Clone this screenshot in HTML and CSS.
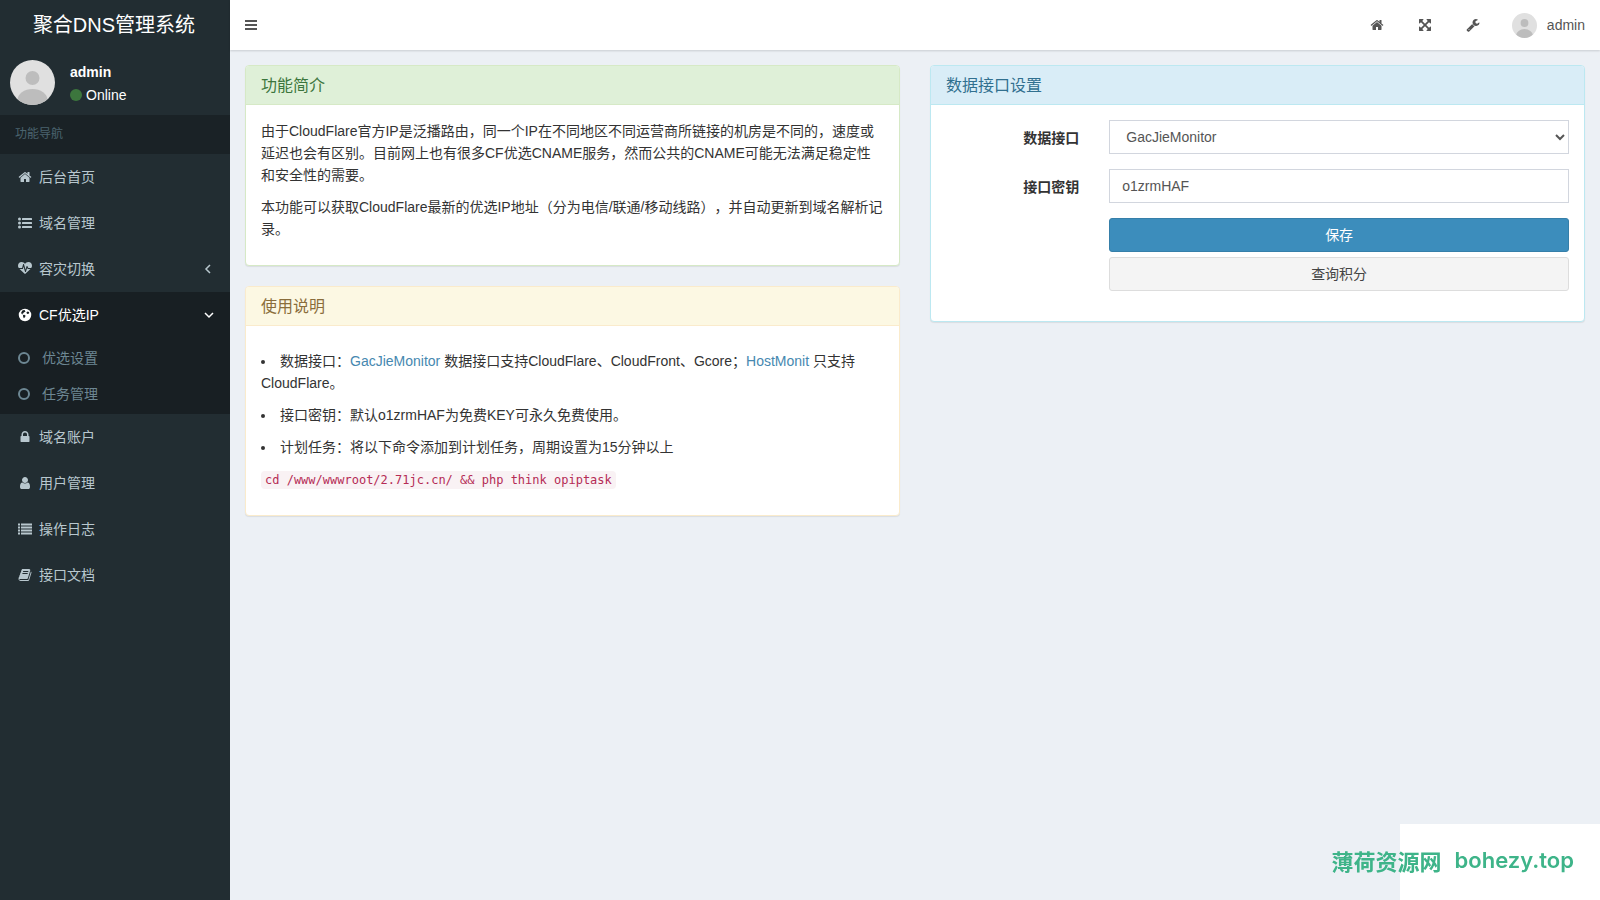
FILE: index.html
```html
<!DOCTYPE html>
<html lang="zh-CN">
<head>
<meta charset="utf-8">
<title>聚合DNS管理系统</title>
<link rel="stylesheet" href="styles.css">
</head>
<body>
<svg class="sprite" aria-hidden="true">
  <symbol id="i-home" viewBox="0 0 1792 1792"><path d="M1472 992v480q0 26-19 45t-45 19h-384v-384h-256v384h-384q-26 0-45-19t-19-45v-480q0-1 .5-3t.5-3l575-474 575 474q1 2 1 6zm223-69l-62 74q-8 9-21 11h-3q-13 0-21-7l-692-577-692 577q-12 8-24 7-13-2-21-11l-62-74q-8-10-7-23.5t11-21.5l719-599q32-26 76-26t76 26l244 204v-195q0-14 9-23t23-9h192q14 0 23 9t9 23v408l219 182q10 8 11 21.5t-7 23.5z"/></symbol>
  <symbol id="i-list-ul" viewBox="0 0 1792 1792"><circle cx="192" cy="384" r="192"/><circle cx="192" cy="896" r="192"/><circle cx="192" cy="1408" r="192"/><rect x="512" y="256" width="1280" height="256" rx="32"/><rect x="512" y="768" width="1280" height="256" rx="32"/><rect x="512" y="1280" width="1280" height="256" rx="32"/></symbol>
  <symbol id="i-list" viewBox="0 0 1792 1792"><path d="M0 192h256v256H0zM0 576h256v256H0zM0 960h256v256H0zM0 1344h256v256H0zM384 192h1408v256H384zM384 576h1408v256H384zM384 960h1408v256H384zM384 1344h1408v256H384z"/></symbol>
  <symbol id="i-heart" viewBox="0 0 1792 1792"><path d="M1280 896h305q-5 6-10 10.5t-9 7.5l-3 4-623 600q-18 18-44 18t-44-18l-624-602q-5-2-21-20h369q22 0 39.5-13.5t22.5-34.5l70-281 190 667q6 20 23 33t39 13q21 0 38-13t23-33l146-485 56 112q18 35 57 35zm512-428q0 145-103 300h-369l-111-221q-8-17-25.5-27t-36.5-8q-45 5-56 46l-129 430-196-686q-6-20-23.5-33t-39.5-13-39 13.5-22 34.5l-116 464h-423q-103-155-103-300 0-220 127-344t351-124q62 0 126.5 21.5t120 58 95.5 68.5 76 68q36-36 76-68t95.5-68.5 120-58 126.5-21.5q224 0 351 124t127 344z"/></symbol>
  <symbol id="i-globe" viewBox="0 0 1792 1792"><circle cx="896" cy="896" r="800"/><path class="land" d="M560 330L760 250 900 270 850 370 960 400 900 500 760 540 680 680 560 720 600 800 560 840 470 760 400 620ZM1080 540L1250 440 1400 520 1440 640 1300 760 1140 720ZM640 880L800 860 980 1000 880 1180 760 1300 660 1160Z"/></symbol>
  <symbol id="i-lock" viewBox="0 0 1792 1792"><path d="M640 768h512v-192q0-106-75-181t-181-75-181 75-75 181v192zm832 96v576q0 40-28 68t-68 28h-960q-40 0-68-28t-28-68v-576q0-40 28-68t68-28h32v-192q0-184 132-316t316-132 316 132 132 316v192h32q40 0 68 28t28 68z"/></symbol>
  <symbol id="i-user" viewBox="0 0 1792 1792"><path d="M1536 1399q0 109-62.5 187t-150.5 78h-854q-88 0-150.5-78t-62.5-187q0-85 8.5-160.5t31.5-152 58.5-131 94-89 134.5-34.5q131 128 313 128t313-128q76 0 134.5 34.5t94 89 58.5 131 31.5 152 8.5 160.5zm-256-887q0 159-112.5 271.5t-271.5 112.5-271.5-112.5-112.5-271.5 112.5-271.5 271.5-112.5 271.5 112.5 112.5 271.5z"/></symbol>
  <symbol id="i-book" viewBox="0 0 1792 1792"><path d="M1703 478q40 57 18 129l-275 906q-19 64-76.5 107.5t-122.5 43.5h-923q-77 0-148.5-53.5t-99.5-131.5q-24-67-2-127 0-4 3-27t4-37q1-8-3-21.5t-3-19.5q2-11 8-21t16.5-23.5 16.5-23.5q23-38 45-91.5t30-91.5q3-10 .5-30t-.5-28q3-11 17-28t17-23q21-36 42-92t25-90q1-9-2.5-32t.5-28q4-13 22-30.5t22-22.5q19-26 42.5-84.5t27.5-96.5q1-8-3-25.5t-2-26.5q2-8 9-18t18-23 17-21q8-12 16.5-30.5t15-35 16-36 19.5-32 26.5-23.5 36-11.5 47.5 5.5l-1 3q38-9 51-9h761q74 0 114 56t18 130l-274 906q-36 119-71.5 153.5t-128.5 34.5h-869q-27 0-38 15-11 16-1 43 24 70 144 70h923q29 0 56-15.5t35-41.5l300-987q7-22 5-57 38 15 59 43zm-1064 2q-4 13 2 22.5t20 9.5h608q13 0 25.5-9.5t16.5-22.5l21-64q4-13-2-22.5t-20-9.5h-608q-13 0-25.5 9.5t-16.5 22.5zm-83 256q-4 13 2 22.5t20 9.5h608q13 0 25.5-9.5t16.5-22.5l21-64q4-13-2-22.5t-20-9.5h-608q-13 0-25.5 9.5t-16.5 22.5z"/></symbol>
  <symbol id="i-expand" viewBox="0 0 1792 1792"><path d="M1411 541l-355 355 355 355 144-144q29-31 70-14 39 17 39 59v448q0 26-19 45t-45 19h-448q-42 0-59-40-17-39 14-69l144-144-355-355-355 355 144 144q31 30 14 69-17 40-59 40h-448q-26 0-45-19t-19-45v-448q0-42 40-59 39-17 69 14l144 144 355-355-355-355-144 144q-19 19-45 19-12 0-24-5-40-17-40-59v-448q0-26 19-45t45-19h448q42 0 59 40 17 39-14 69l-144 144 355 355 355-355-144-144q-31-30-14-69 17-40 59-40h448q26 0 45 19t19 45v448q0 42-39 59-13 5-25 5-26 0-45-19z"/></symbol>
  <symbol id="i-wrench" viewBox="0 0 1792 1792"><path d="M448 1472q0-26-19-45t-45-19-45 19-19 45 19 45 45 19 45-19 19-45zm644-420l-682 682q-37 37-90 37-52 0-91-37l-106-108q-38-36-38-90 0-53 38-91l681-681q39 98 114.5 173.5t173.5 114.5zm634-435q0 39-23 106-47 134-164.5 217.5t-258.5 83.5q-185 0-316.5-131.5t-131.5-316.5 131.5-316.5 316.5-131.5q58 0 121.5 16.5t107.5 46.5q16 11 16 28t-16 28l-293 169v224l193 107q5-3 79-48.5t135.5-81 70.5-35.5q15 0 23.5 10t8.5 25z"/></symbol>
  <symbol id="i-bars" viewBox="0 0 1792 1792"><path d="M128 256h1536v256H128zM128 768h1536v256H128zM128 1280h1536v256H128z"/></symbol>
  <symbol id="i-ring" viewBox="0 0 14 14"><circle cx="6" cy="7" r="5" fill="none" stroke="currentColor" stroke-width="2"/></symbol>
  <symbol id="i-left" viewBox="0 0 14 14"><path d="M9 3L5 7l4 4" fill="none" stroke="currentColor" stroke-width="1.5"/></symbol>
  <symbol id="i-down" viewBox="0 0 14 14"><path d="M4 5l4 4 4-4" fill="none" stroke="currentColor" stroke-width="1.5"/></symbol>
  <symbol id="i-avatar" viewBox="0 0 45 45"><clipPath id="face"><circle cx="22.500" cy="22.500" r="22.500"/></clipPath><g clip-path="url(#face)"><path fill="#e0e0e0" d="M0 0h45v45H0z"/><circle cx="22.500" cy="18" r="7" fill="#bdbdbd"/><ellipse cx="22.500" cy="40" rx="15" ry="11" fill="#bdbdbd"/></g></symbol>
</svg>

<div class="app">
  <aside class="sidebar">
    <a class="logo" href="#">聚合DNS管理系统</a>
    <div class="user-panel">
      <svg class="avatar"><use href="#i-avatar"/></svg>
      <div class="user-info">
        <strong>admin</strong>
        <a class="status" href="#"><span class="dot"></span>Online</a>
      </div>
    </div>
    <div class="nav-title">功能导航</div>
    <nav class="menu">
      <a class="item" href="#"><svg class="icon"><use href="#i-home"/></svg>后台首页</a>
      <a class="item" href="#"><svg class="icon"><use href="#i-list-ul"/></svg>域名管理</a>
      <a class="item" href="#"><svg class="icon"><use href="#i-heart"/></svg>容灾切换<svg class="icon arrow"><use href="#i-left"/></svg></a>
      <a class="item active" href="#"><svg class="icon"><use href="#i-globe"/></svg>CF优选IP<svg class="icon arrow"><use href="#i-down"/></svg></a>
      <div class="submenu">
        <a class="subitem" href="#"><svg class="icon"><use href="#i-ring"/></svg>优选设置</a>
        <a class="subitem" href="#"><svg class="icon"><use href="#i-ring"/></svg>任务管理</a>
      </div>
      <a class="item" href="#"><svg class="icon"><use href="#i-lock"/></svg>域名账户</a>
      <a class="item" href="#"><svg class="icon"><use href="#i-user"/></svg>用户管理</a>
      <a class="item" href="#"><svg class="icon"><use href="#i-list"/></svg>操作日志</a>
      <a class="item" href="#"><svg class="icon"><use href="#i-book"/></svg>接口文档</a>
    </nav>
  </aside>

  <div class="main">
    <header class="topbar">
      <button class="tool" type="button" aria-label="切换菜单"><svg class="icon"><use href="#i-bars"/></svg></button>
      <div class="tools">
        <a class="tool" href="#" aria-label="首页"><svg class="icon"><use href="#i-home"/></svg></a>
        <a class="tool" href="#" aria-label="全屏"><svg class="icon"><use href="#i-expand"/></svg></a>
        <a class="tool" href="#" aria-label="设置"><svg class="icon"><use href="#i-wrench"/></svg></a>
        <a class="tool account" href="#"><svg class="avatar small"><use href="#i-avatar"/></svg>admin</a>
      </div>
    </header>

    <main class="content">
      <div class="column">
        <section class="panel success">
          <h3>功能简介</h3>
          <div class="body">
            <p>由于CloudFlare官方IP是泛播路由，同一个IP在不同地区不同运营商所链接的机房是不同的，速度或延迟也会有区别。目前网上也有很多CF优选CNAME服务，然而公共的CNAME可能无法满足稳定性和安全性的需要。</p>
            <p>本功能可以获取CloudFlare最新的优选IP地址（分为电信/联通/移动线路），并自动更新到域名解析记录。</p>
          </div>
        </section>
        <section class="panel warning">
          <h3>使用说明</h3>
          <div class="body">
            <ul class="notes">
              <li>数据接口：<a href="#">GacJieMonitor</a> 数据接口支持CloudFlare、CloudFront、Gcore；<a href="#">HostMonit</a> 只支持CloudFlare。</li>
              <li>接口密钥：默认o1zrmHAF为免费KEY可永久免费使用。</li>
              <li>计划任务：将以下命令添加到计划任务，周期设置为15分钟以上</li>
            </ul>
            <p><code>cd /www/wwwroot/2.71jc.cn/ &amp;&amp; php think opiptask</code></p>
          </div>
        </section>
      </div>
      <div class="column">
        <section class="panel info">
          <h3>数据接口设置</h3>
          <form class="form">
            <label for="api">数据接口</label>
            <div class="cell"><select class="field" id="api"><option>GacJieMonitor</option><option>HostMonit</option></select></div>
            <label for="key">接口密钥</label>
            <div class="cell"><input class="field" id="key" type="text" value="o1zrmHAF"></div>
            <div class="cell actions">
              <button class="btn primary" type="button">保存</button>
              <button class="btn" type="button">查询积分</button>
            </div>
          </form>
        </section>
      </div>
    </main>
  </div>
</div>

<div class="watermark"><span class="site-name">薄荷资源网</span><span class="site-host">bohezy.top</span></div>
</body>
</html>
```
FILE: styles.css
```css
* { box-sizing: border-box; }

body {
  margin: 0;
  background: #ecf0f5;
  color: #333;
  font: 14px/22px "Liberation Sans", "Noto Sans CJK SC", sans-serif;
  text-spacing-trim: space-all;
}

a { color: #4688b0; text-decoration: none; }

.sprite { position: absolute; width: 0; height: 0; }
.icon { width: 14px; height: 14px; flex: none; fill: currentColor; }
.land { fill: #181f23; }

.app { display: flex; min-height: 100vh; }

/* Sidebar */
.sidebar { width: 230px; flex: none; background: #222d32; }
.logo {
  display: block;
  color: #fff;
  font-size: 20px;
  line-height: 50px;
  text-align: center;
  padding-right: 2px;
}
.user-panel { display: flex; gap: 15px; padding: 10px; height: 65px; color: #fff; }
.avatar { width: 45px; height: 45px; flex: none; }
.avatar.small { width: 25px; height: 25px; }
.user-info { display: flex; flex-direction: column; gap: 1px; padding-top: 1px; }
.status { display: flex; align-items: center; gap: 4px; color: #fff; }
.dot { width: 12px; height: 12px; border-radius: 50%; background: #3c763d; }
.nav-title { padding: 8px 15px 9px; background: #1a2226; color: #4b646f; font-size: 12px; }

.item {
  display: flex;
  align-items: center;
  gap: 7px;
  padding: 12px 15px 12px 18px;
  color: #b8c7ce;
}
.item.active { background: #181f23; color: #fff; }
.arrow { margin-left: auto; }
.submenu { padding: 2px 0; background: #181f23; }
.subitem {
  display: flex;
  align-items: center;
  gap: 10px;
  padding: 7px 18px;
  color: #6d8793;
}

/* Top bar */
.main { flex: 1; min-width: 0; }
.topbar {
  display: flex;
  justify-content: space-between;
  height: 50px;
  background: #fff;
  box-shadow: 0 1px 2px rgba(0, 0, 0, .15);
}
.tools { display: flex; }
.tool {
  display: flex;
  align-items: center;
  padding: 0 14px;
  gap: 10px;
  border: 0;
  background: none;
  color: #555;
}
.tools .tool { padding: 0 17px; }
.tools .account { padding: 0 15px; }

/* Panels */
.content { display: flex; gap: 30px; padding: 15px; }
.column { flex: 1; min-width: 0; }
.panel {
  margin-bottom: 20px;
  border: 1px solid #d6e9c6;
  border-radius: 4px;
  background: #fff;
  box-shadow: 0 1px 1px rgba(0, 0, 0, .08);
}
.panel h3 {
  margin: 0;
  padding: 10px 15px 8px;
  border-bottom: 1px solid #d6e9c6;
  border-radius: 3px 3px 0 0;
  background: #dff0d8;
  color: #3c763d;
  font-size: 16px;
  font-weight: 400;
  line-height: 20px;
}
.warning, .warning h3 { border-color: #faebcc; }
.warning h3 { background: #fcf8e3; color: #8a6d3b; }
.info, .info h3 { border-color: #bce8f1; }
.info h3 { background: #d9edf7; color: #31708f; }

.body { padding: 15px; }
.body p { margin: 0 0 10px; }
.notes { margin: 0; padding: 9px 0 0; list-style-position: inside; }
.notes li { margin-bottom: 10px; }
code {
  padding: 2px 4px;
  border-radius: 4px;
  background: #f9f2f4;
  color: #b52b55;
  font: 12px/18px "DejaVu Sans Mono", monospace;
}

/* Form */
.form {
  display: grid;
  grid-template-columns: 1fr 3fr;
  row-gap: 15px;
  padding: 15px 0 30px;
}
.form label { padding: 7px 15px 0; font-weight: 700; text-align: right; }
.cell { display: grid; padding: 0 15px; }
.field {
  width: 100%;
  height: 34px;
  padding: 6px 12px;
  border: 1px solid #d2d6de;
  border-radius: 0;
  background: #fff;
  color: #555;
  font: inherit;
}
select.field { padding-right: 0; }
.actions { grid-column: 2; gap: 5px; }
.btn {
  height: 34px;
  border: 1px solid #ddd;
  border-radius: 3px;
  background: #f4f4f4;
  color: #444;
  font: inherit;
}
.btn.primary { border-color: #367fa9; background: #3c8dbc; color: #fff; }

/* Site mark in the page corner */
.watermark {
  position: fixed;
  right: 0;
  bottom: 0;
  display: flex;
  justify-content: flex-end;
  align-items: center;
  gap: 13px;
  height: 76px;
  padding: 0 26px 4px 0;
  background: linear-gradient(#fff, #fff) right / 200px 100% no-repeat;
  color: #3eb489;
  white-space: nowrap;
}
.site-name { font-size: 22px; font-weight: 700; font-family: "Noto Sans CJK SC", sans-serif; }
.site-host { font-size: 22px; font-weight: 600; font-family: Inter, sans-serif; }
```
